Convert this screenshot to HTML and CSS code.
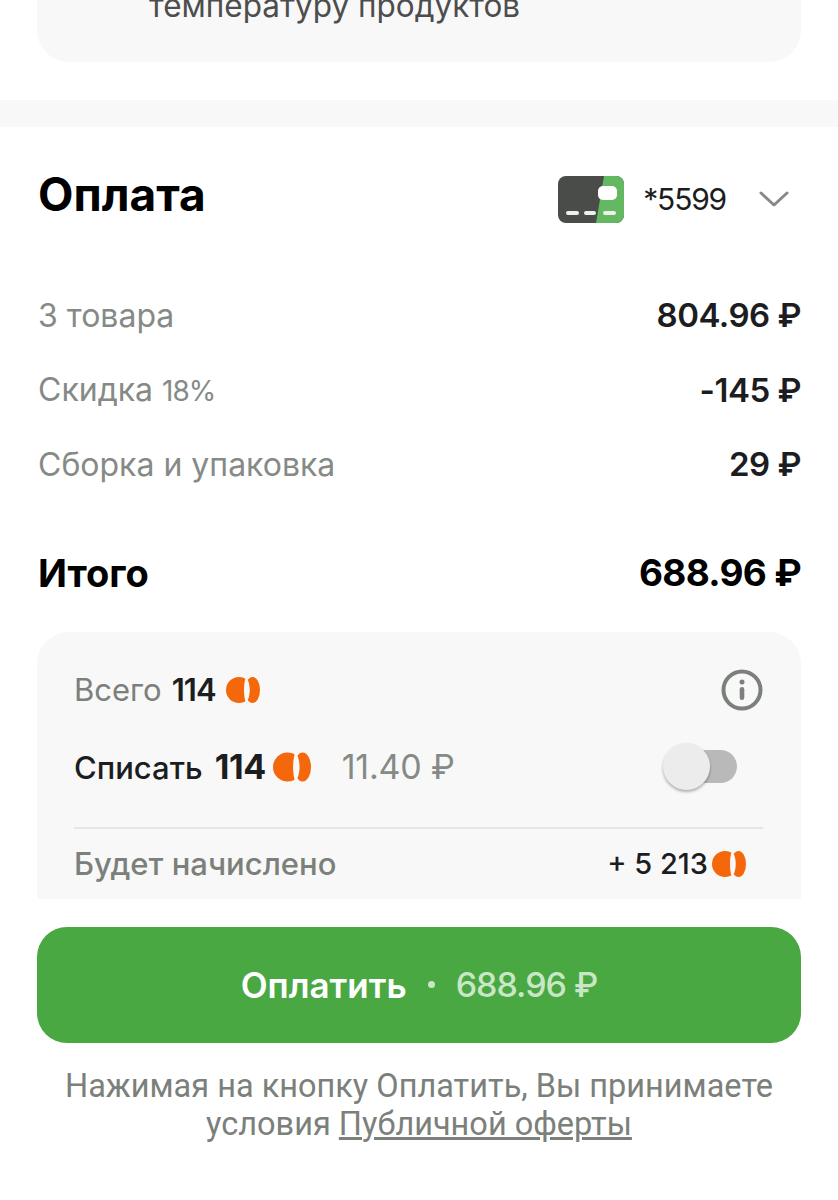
FILE: index.html
```html
<!DOCTYPE html>
<html>
<head>
    <title>Оплата</title>
    <link rel="stylesheet" href="styles.css">
</head>
<body>
    <div class="note">
        <p class="note-text">температуру продуктов</p>
    </div>

    <div class="band"></div>

    <div class="pay-head">
        <h1 class="pay-title">Оплата</h1>
        <div class="card-pick">
            <svg class="card-icon" width="66" height="47" viewBox="0 0 66 47">
                <rect width="66" height="47" rx="8" fill="#4a4c4a"/>
                <path d="M46 0h12a8 8 0 0 1 8 8v31a8 8 0 0 1-8 8H38z" fill="#63b861"/>
                <rect x="40" y="10" width="19" height="14" rx="5" fill="#fff"/>
                <rect x="8" y="35" width="13" height="4" rx="2" fill="#eee"/>
                <rect x="26" y="35" width="12" height="4" rx="2" fill="#eee"/>
                <rect x="45" y="35" width="13" height="4" rx="2" fill="#eee"/>
            </svg>
            <span class="card-num">*5599</span>
            <svg class="chevron" width="30" height="18" viewBox="0 0 30 18">
                <path d="M2 3l13 12L28 3" fill="none" stroke="#858a86" stroke-width="3" stroke-linecap="round" stroke-linejoin="round"/>
            </svg>
        </div>
    </div>

    <div class="rows">
        <div class="row"><span class="row-label">3 товара</span><span class="row-value">804.96 ₽</span></div>
        <div class="row"><span class="row-label">Скидка <span class="row-pct">18%</span></span><span class="row-value">-145 ₽</span></div>
        <div class="row"><span class="row-label">Сборка и упаковка</span><span class="row-value">29 ₽</span></div>
    </div>

    <div class="total"><span>Итого</span><span class="total-value">688.96 ₽</span></div>

    <div class="bonus">
        <div class="bonus-top">
            <div class="bonus-all">
                Всего <b>114</b>
                <svg class="coin" width="34" height="26" viewBox="0 0 34 26">
                    <circle cx="13" cy="13" r="13" fill="#f4670a"/>
                    <ellipse cx="26.500" cy="13" rx="7.500" ry="13" fill="#f4670a"/>
                    <path d="M20 0C17.300 6 17.300 20 20 26C25 20 25 6 20 0z" fill="#f8f8f8"/>
                </svg>
            </div>
            <svg class="info" width="42" height="42" viewBox="0 0 42 42">
                <circle cx="21" cy="21" r="18.500" fill="none" stroke="#7b807b" stroke-width="4"/>
                <circle cx="21" cy="13" r="2.500" fill="#7b807b"/>
                <rect x="18.700" y="18" width="4.600" height="13" rx="2.300" fill="#7b807b"/>
            </svg>
        </div>
        <div class="bonus-use">
            <span class="use-label">Списать <b>114</b></span>
            <svg class="coin-big" width="38" height="30" viewBox="0 0 34 26">
                <circle cx="13" cy="13" r="13" fill="#f4670a"/>
                <ellipse cx="26.500" cy="13" rx="7.500" ry="13" fill="#f4670a"/>
                <path d="M20 0C17.300 6 17.300 20 20 26C25 20 25 6 20 0z" fill="#f8f8f8"/>
            </svg>
            <span class="use-sum">11.40 ₽</span>
            <div class="toggle"><div class="toggle-knob"></div></div>
        </div>
        <div class="bonus-earn">
            <span class="earn-label">Будет начислено</span>
            <span class="earn-value">+ 5 213
                <svg class="coin" width="34" height="26" viewBox="0 0 34 26">
                    <circle cx="13" cy="13" r="13" fill="#f4670a"/>
                    <ellipse cx="26.500" cy="13" rx="7.500" ry="13" fill="#f4670a"/>
                    <path d="M20 0C17.300 6 17.300 20 20 26C25 20 25 6 20 0z" fill="#f8f8f8"/>
                </svg>
            </span>
        </div>
    </div>

    <button class="pay-btn">Оплатить<i class="pay-dot"></i><span class="pay-sum">688.96 ₽</span></button>

    <p class="legal">Нажимая на кнопку Оплатить, Вы принимаете<br>условия <u>Публичной оферты</u></p>
</body>
</html>
```

FILE: styles.css
```css
html, body {
    height: 1200px;
    overflow: hidden;
}

body {
    margin: 0;
    background-color: #fff;
    color: #1c1d20;
    font-family: Inter, "Noto Sans", sans-serif;
}

.note {
    height: 62px;
    margin: 0 37px;
    padding-left: 112px;
    background-color: #f8f8f8;
    border-radius: 0 0 32px 32px;
    overflow: hidden;
}

.note-text {
    margin: -11px 0 0;
    font-size: 31.500px;
    line-height: 34px;
    color: #4d4d4d;
}

.band {
    height: 27px;
    margin-top: 38px;
    background-color: #f8f8f8;
}

.pay-head {
    display: flex;
    justify-content: space-between;
    align-items: center;
    height: 48px;
    margin: 43px 37px 0 38px;
}

.pay-title {
    margin: 0;
    font-size: 46px;
    font-weight: 700;
    color: #000;
}

.card-pick {
    display: flex;
    align-items: center;
    margin-top: 10px;
}

.card-num {
    margin-left: 19px;
    font-size: 30px;
    letter-spacing: -1.200px;
    color: #1c1d20;
}

.chevron {
    margin: 0 12px 0 33px;
}

.rows {
    margin: 60px 37px 0 38px;
}

.row {
    display: flex;
    justify-content: space-between;
    align-items: center;
    height: 74.500px;
}

.row-label {
    font-size: 32px;
    color: #858a86;
}

.row-pct {
    font-size: 28px;
    letter-spacing: -1px;
}

.row-value {
    font-size: 33px;
    font-weight: 600;
    letter-spacing: -0.500px;
}

.total {
    display: flex;
    justify-content: space-between;
    align-items: center;
    height: 48px;
    margin: 47px 37px 0 38px;
    font-size: 38px;
    font-weight: 700;
    color: #000;
}

.total-value {
    font-size: 37px;
    letter-spacing: -0.700px;
}

.bonus {
    height: 267px;
    margin: 35px 37px 0;
    padding: 0 38px 0 37px;
    box-sizing: border-box;
    background-color: #f8f8f8;
    border-radius: 32px 32px 0 0;
    overflow: hidden;
}

.bonus-top {
    display: flex;
    justify-content: space-between;
    align-items: center;
    height: 42px;
    margin-top: 37px;
}

.bonus-all {
    display: flex;
    align-items: center;
    font-size: 31px;
    color: #7b807b;
}

.bonus-all b {
    margin: 0 10px;
    font-weight: 600;
    letter-spacing: -1px;
    color: #1c1d20;
}

.bonus-use {
    display: flex;
    align-items: center;
    height: 48px;
    margin-top: 32px;
}

.use-label {
    font-size: 31px;
    font-weight: 500;
    color: #1c1d20;
}

.use-label b {
    margin-left: 4px;
    font-size: 34px;
    font-weight: 700;
    letter-spacing: -0.500px;
}

.coin-big {
    margin-left: 7px;
}

.use-sum {
    margin-left: 31px;
    font-size: 34px;
    letter-spacing: -0.200px;
    color: #858a86;
}

.toggle {
    position: relative;
    width: 64px;
    height: 33px;
    margin: 0 26px 0 auto;
    background-color: #b9b9b9;
    border-radius: 17px;
}

.toggle-knob {
    position: absolute;
    left: -10px;
    top: -7px;
    width: 47px;
    height: 47px;
    background-color: #ececec;
    border-radius: 50%;
    box-shadow: 0 2px 3px rgba(0, 0, 0, 0.3);
}

.bonus-earn {
    display: flex;
    justify-content: space-between;
    align-items: center;
    height: 70px;
    margin-top: 36px;
    border-top: 2px solid #e6e6e6;
}

.earn-label {
    font-size: 31px;
    font-weight: 500;
    color: #7b807b;
}

.earn-value {
    display: flex;
    align-items: center;
    gap: 4px;
    margin-right: 17px;
    font-size: 29px;
    font-weight: 500;
}

.pay-btn {
    display: flex;
    justify-content: center;
    align-items: center;
    width: 764px;
    height: 116px;
    margin: 28px 0 0 37px;
    padding: 0;
    border: none;
    border-radius: 30px;
    background-color: #4aa842;
    color: #fff;
    font-family: inherit;
    font-size: 35px;
    font-weight: 600;
}

.pay-dot {
    width: 7px;
    height: 7px;
    margin: 0 21px;
    border-radius: 50%;
    background-color: #c9e7c6;
}

.pay-sum {
    font-size: 34px;
    font-weight: 500;
    letter-spacing: -1px;
    color: #c9e7c6;
}

.legal {
    margin: 24px 0 0;
    text-align: center;
    font-family: Roboto, sans-serif;
    font-size: 32.500px;
    line-height: 38px;
    color: #7b807b;
}
```
